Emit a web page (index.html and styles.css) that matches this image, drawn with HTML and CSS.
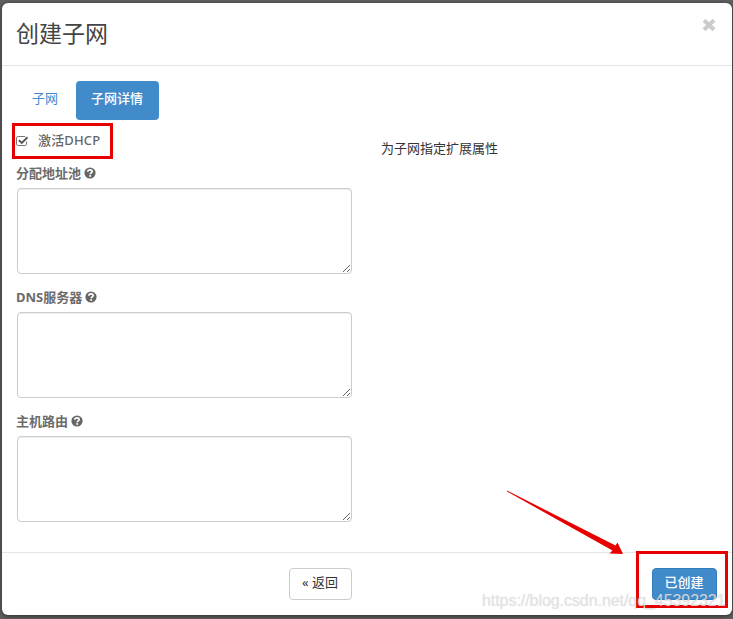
FILE: index.html
```html
<!DOCTYPE html>
<html lang="zh-CN">
<head>
<meta charset="utf-8">
<title>创建子网</title>
<link rel="stylesheet" href="styles.css">
</head>
<body>
<svg class="defs" width="0" height="0" aria-hidden="true">
  <symbol id="help" viewBox="0 0 12 12">
    <circle cx="6" cy="6" r="5.6" fill="#666"/>
    <path d="M3.800 4.800C3.900 3.400 4.900 2.900 6 2.900s2.200.5 2.200 1.700C8.200 5.900 6.200 5.900 6.200 7.300" fill="none" stroke="#fff" stroke-width="1.700"/>
    <path d="M5.300 8.100h1.800v1.700H5.300z" fill="#fff"/>
  </symbol>
</svg>
<main class="modal">
  <header class="modal-header">
    <h1>创建子网</h1>
    <button class="close" aria-label="关闭"><svg width="14" height="14" viewBox="0 0 14 14"><path d="M2 2.200 12 11.800M12 2.200 2 11.800" stroke="#ccc" stroke-width="4"/></svg></button>
  </header>
  <section class="modal-body">
    <nav class="tabs"><a class="tab">子网</a><a class="tab active">子网详情</a></nav>
    <div class="columns">
      <form class="fields">
        <label class="check">
          <svg width="13" height="12" viewBox="0 0 13 12" fill="none"><path d="M10.500 6.500v2.700q0 1.300-1.300 1.300H2.300Q.5 10.500.5 9.200V2.800Q.5 1.500 2.300 1.500h6.900" stroke="#777"/><path d="m2.900 5.200 2.900 2.700 5.700-5.600" stroke="#555" stroke-width="1.900"/></svg>
          <span>激活DHCP</span>
        </label>
        <div class="field"><label>分配地址池 <svg class="help"><use href="#help"/></svg></label><textarea></textarea></div>
        <div class="field"><label>DNS服务器 <svg class="help"><use href="#help"/></svg></label><textarea></textarea></div>
        <div class="field"><label>主机路由 <svg class="help"><use href="#help"/></svg></label><textarea></textarea></div>
      </form>
      <p class="description">为子网指定扩展属性</p>
    </div>
  </section>
  <footer class="modal-footer">
    <button class="btn back">« 返回</button>
    <button class="btn primary">已创建</button>
  </footer>
</main>
<div class="mark mark-dhcp"></div>
<div class="mark mark-create"></div>
<svg class="arrow" width="118" height="66" viewBox="0 0 118 66"><path d="M1 .5 109.500 55.500 111.500 52.500 117 64 103.500 63.500 106.500 60.500 1 1.500z" fill="#e60000"/></svg>
<div class="watermark">https://blog.csdn.net/qq_45392321</div>
</body>
</html>
```
FILE: styles.css
```css
* { box-sizing: border-box; }
body {
  margin: 0;
  height: 619px;
  padding: 3px 1px 4px 2px;
  overflow: hidden;
  background: #626060;
  color: #333;
  font: 13px/19px "Noto Sans", "Noto Sans CJK SC", sans-serif;
}
.defs { position: absolute; }
.modal {
  display: flex;
  flex-direction: column;
  height: 612px;
  background: #fff;
  border-radius: 6px;
  box-shadow: 0 1px 5px rgba(0, 0, 0, .6);
}
.modal-header {
  display: flex;
  justify-content: space-between;
  align-items: flex-start;
  height: 63px;
  padding: 14px 15px 0 14px;
  border-bottom: 1px solid #e5e5e5;
}
h1 { margin: 0; font-size: 23px; line-height: 33px; font-weight: 400; color: #444; }
.close { padding: 0; border: 0; background: none; line-height: 0; margin: 1px 1px 0 0; }
.modal-body { flex: 1; padding: 15px 15px 0; }
.tabs { display: flex; gap: 3px; }
.tab { padding: 8px 15px 12px; height: 39px; color: #428bca; border-radius: 4px; }
.tab.active { background: #428bca; color: #fff; font-weight: 500; padding-right: 16px; }
.columns { display: flex; gap: 29px; }
.fields { width: 335px; }
.check {
  display: flex;
  align-items: center;
  gap: 8px;
  height: 38px;
  margin: 1px 0 0 -1px;
  color: #666;
  font-weight: 500;
}
.check svg { margin-top: 1px; }
.check span { padding-left: 1px; letter-spacing: .15px; }
.field { height: 124px; color: #6b6b6b; font-weight: 700; }
.field label { display: flex; align-items: center; gap: 3px; height: 29px; padding-bottom: 1px; margin-left: -1px; }
.field textarea { margin: 0; }
.help { width: 12px; height: 12px; }
textarea {
  display: block;
  width: 335px;
  height: 86px;
  border: 1px solid #ccc;
  border-radius: 4px;
  box-shadow: inset 0 1px 1px rgba(0, 0, 0, .075);
  resize: vertical;
}
.description { margin: 19px 0 0; }
.modal-footer {
  display: flex;
  justify-content: space-between;
  height: 63px;
  padding: 15px 15px 0 287px;
  border-top: 1px solid #e5e5e5;
}
.btn {
  height: 32px;
  padding: 0 1px 3px 0;
  border: 1px solid #ccc;
  border-radius: 4px;
  background: #fff;
  color: #333;
  font: inherit;
}
.back { width: 63px; }
.primary { width: 65px; background: #428bca; border-color: #357ebd; color: #fff; font-weight: 500; }
.mark { position: absolute; border: 3px solid #e60000; }
.mark-dhcp { left: 12px; top: 123px; width: 101px; height: 36px; }
.mark-create { left: 636px; top: 551px; width: 92px; height: 57px; }
.arrow { position: absolute; left: 506px; top: 490px; }
.watermark {
  position: absolute;
  left: 482px;
  top: 591px;
  font: 16px/20px "Liberation Sans", sans-serif;
  letter-spacing: -.06px;
  color: rgba(228, 228, 228, .85);
  text-shadow: 0 0 1px rgba(120, 120, 120, .25);
  white-space: nowrap;
}
```
